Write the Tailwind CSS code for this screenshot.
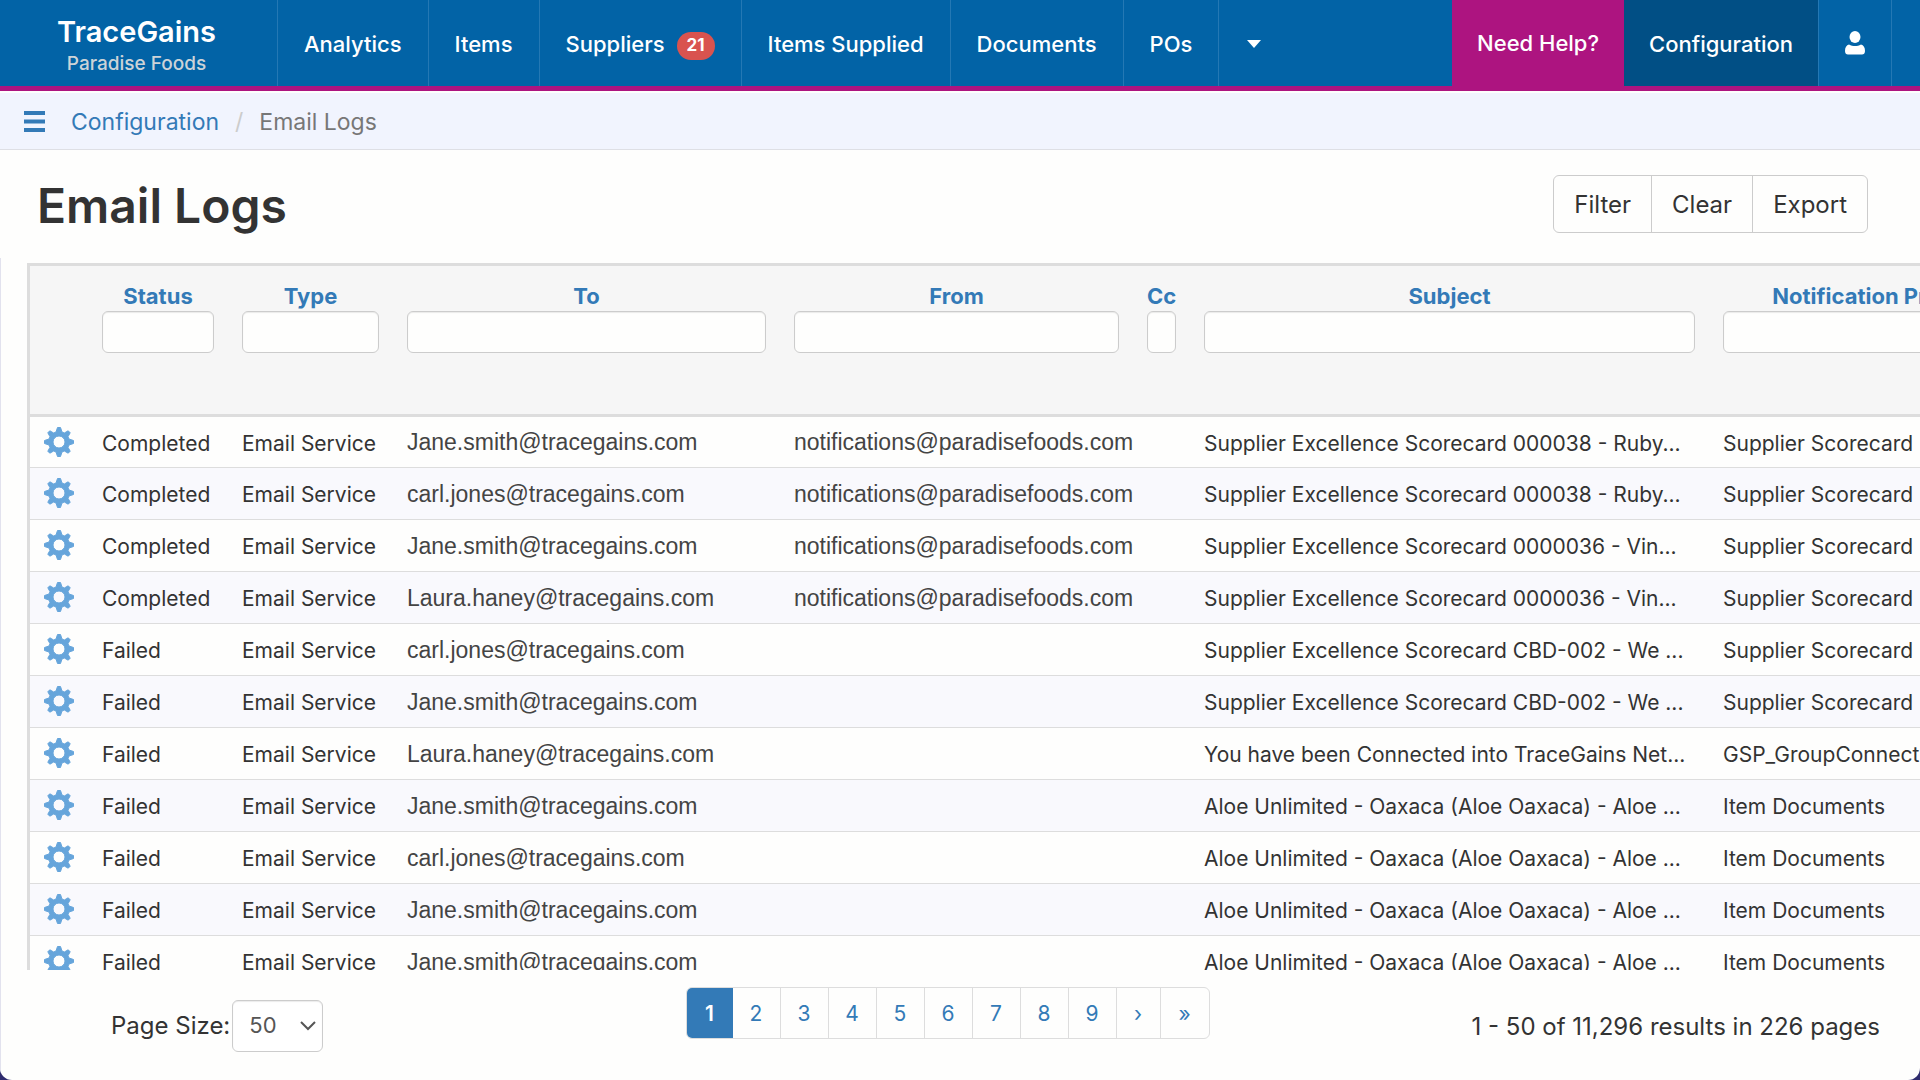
<!DOCTYPE html>
<html lang="en">
<head>
  <meta charset="UTF-8" />
  <meta name="viewport" content="width=device-width, initial-scale=1.0" />
  <title>Email Logs - TraceGains</title>
  <script src="https://cdn.jsdelivr.net/npm/@tailwindcss/browser@4"></script>
</head>
<body class="bg-[#2f2c6e] font-['Inter','Liberation_Sans',sans-serif] text-[#333]">
  <div class="h-screen flex flex-col overflow-hidden bg-[#fefefd] rounded-b-xl">

    <!-- Top navigation -->
    <header class="shrink-0 h-[91px] flex bg-[#0263a6] border-b-5 border-[#ad1480] text-[22px] font-medium text-white">
      <a href="#" class="w-[278px] flex flex-col items-center justify-center leading-8 border-r border-[#2478b4] pt-[10px] pr-1">
        <span class="text-[29px] font-semibold">TraceGains</span>
        <span class="text-[19px] text-[#ccd3d8]">Paradise Foods</span>
      </a>
      <nav class="flex">
        <a href="#" class="px-[26px] pt-[2px] flex items-center border-r border-[#2478b4]">Analytics</a>
        <a href="#" class="px-[26px] pt-[2px] flex items-center border-r border-[#2478b4]">Items</a>
        <a href="#" class="px-[26px] pt-[2px] flex items-center gap-3 border-r border-[#2478b4]">Suppliers
          <span class="mt-1 h-7 px-[10px] flex items-center rounded-full bg-[#d9534f] text-[17px] font-bold">21</span>
        </a>
        <a href="#" class="px-[26px] pt-[2px] flex items-center border-r border-[#2478b4]">Items Supplied</a>
        <a href="#" class="px-[26px] pt-[2px] flex items-center border-r border-[#2478b4]">Documents</a>
        <a href="#" class="px-[26px] pt-[2px] flex items-center border-r border-[#2478b4]">POs</a>
        <button type="button" aria-label="More" class="px-7 pt-[2px] flex items-center">
          <svg class="w-[14px] h-2" viewBox="0 0 14 8" fill="currentColor"><path d="M0 0h14L7 8z" /></svg>
        </button>
      </nav>
      <nav class="flex ml-auto">
        <a href="#" class="px-[25px] flex items-center bg-[#ad1480]">Need Help?</a>
        <a href="#" class="px-[25px] pt-[2px] flex items-center bg-[#014f85]">Configuration</a>
        <a href="#" aria-label="Profile" class="px-[26px] flex items-center border-x border-[#2478b4]">
          <svg class="w-5 h-6" viewBox="0 0 20 24" fill="currentColor">
            <ellipse cx="10" cy="6" rx="5.5" ry="6" />
            <path d="M4 13.5c2 1.3 4 1.6 6 1.6s4-.3 6-1.6c2.600.6 4 3 4 6.500 0 2.400-1.300 3.500-3 3.500H3c-1.700 0-3-1.100-3-3.500 0-3.500 1.400-5.900 4-6.500z" />
          </svg>
        </a>
        <span class="w-7"></span>
      </nav>
    </header>

    <!-- Breadcrumb -->
    <div class="shrink-0 mt-[2px] h-[57px] flex items-center bg-[#f1f4fe] border-b border-[#dedfe5] px-6 text-[23px]">
      <button type="button" aria-label="Toggle menu" class="text-[#337ab7]">
        <svg class="w-[21px] h-[21px]" viewBox="0 0 21 21" fill="currentColor"><path d="M0 0h21v4H0zM0 8.500h21v4H0zM0 17h21v4H0z" /></svg>
      </button>
      <a href="#" class="ml-[26px] pt-[2px] text-[#337ab7]">Configuration</a>
      <span class="mx-4 pt-[2px] text-[#ccc]">/</span>
      <span class="pt-[2px] text-[#777]">Email Logs</span>
    </div>

    <main class="flex-1 min-h-0 flex flex-col">
      <div class="shrink-0 h-[108px] flex items-center justify-between pl-[37px] pr-[52px]">
        <h1 class="pt-[3px] text-[48px] font-semibold">Email Logs</h1>
        <div class="flex h-[58px] border border-[#ccc] rounded-md divide-x divide-[#ccc] text-2xl">
          <button type="button" class="px-5 pt-[2px]">Filter</button>
          <button type="button" class="px-5 pt-[2px]">Clear</button>
          <button type="button" class="px-5 pt-[2px]">Export</button>
        </div>
      </div>

      <div class="flex-1 min-h-0 flex flex-col border-l border-[#e2e2ee] pt-[5px]">
        <!-- Log grid -->
        <div class="flex-1 min-h-0 ml-[26px] overflow-hidden border-t-3 border-l-3 border-[#ddd]">
          <table class="table-fixed w-[2024px] text-[21px] whitespace-nowrap">
            <colgroup>
              <col class="w-[58px]" />
              <col class="w-[140px]" />
              <col class="w-[165px]" />
              <col class="w-[387px]" />
              <col class="w-[353px]" />
              <col class="w-[57px]" />
              <col class="w-[519px]" />
              <col />
            </colgroup>
            <thead class="bg-[#f6f6f6] text-[22px] text-[#337ab7]">
              <tr id="columns" class="h-[149px] border-b-3 border-[#ddd]">
                <td></td>
              </tr>
            </thead>
            <tbody id="logs"></tbody>
          </table>
        </div>

        <!-- Pager -->
        <footer class="shrink-0 h-[110px] grid grid-cols-[1fr_auto_1fr] items-start pl-[14px] pr-10 pt-[17px] text-2xl">
          <div class="flex items-center gap-[2px] pl-24 pt-[13px]">
            <label for="pageSize">Page Size:</label>
            <div class="relative">
              <select id="pageSize" class="block appearance-none w-[91px] h-[52px] pl-4 border border-[#ccc] rounded-md bg-white text-[22px] text-[#555] shadow-[inset_0_1px_1px_rgba(0,0,0,0.08)]">
                <option>50</option>
              </select>
              <svg class="absolute right-[7px] top-[21px] w-4 h-[10px] pointer-events-none" viewBox="0 0 16 10" fill="none" stroke="#555" stroke-width="2"><path d="M1 1l7 7 7-7" /></svg>
            </div>
          </div>
          <nav aria-label="Pages" class="flex h-[52px] border border-[#ddd] rounded-md overflow-hidden text-[21px] text-[#337ab7]">
            <a href="#" class="w-[46px] pt-[2px] flex items-center justify-center bg-[#337ab7] text-white font-semibold">1</a>
            <a href="#" class="w-12 pt-[2px] flex items-center justify-center border-r border-[#ddd]">2</a>
            <a href="#" class="w-12 pt-[2px] flex items-center justify-center border-r border-[#ddd]">3</a>
            <a href="#" class="w-12 pt-[2px] flex items-center justify-center border-r border-[#ddd]">4</a>
            <a href="#" class="w-12 pt-[2px] flex items-center justify-center border-r border-[#ddd]">5</a>
            <a href="#" class="w-12 pt-[2px] flex items-center justify-center border-r border-[#ddd]">6</a>
            <a href="#" class="w-12 pt-[2px] flex items-center justify-center border-r border-[#ddd]">7</a>
            <a href="#" class="w-12 pt-[2px] flex items-center justify-center border-r border-[#ddd]">8</a>
            <a href="#" class="w-12 pt-[2px] flex items-center justify-center border-r border-[#ddd]">9</a>
            <a href="#" class="w-11 pt-[2px] flex items-center justify-center border-r border-[#ddd]">›</a>
            <a href="#" class="w-12 pt-[2px] flex items-center justify-center">»</a>
          </nav>
          <p class="text-right pt-6">1 - 50 of 11,296 results in 226 pages</p>
        </footer>
      </div>
    </main>
  </div>

  <script>
    const columns = ['Status', 'Type', 'To', 'From', 'Cc', 'Subject', 'Notification Process'];

    const jane = 'Jane.smith@tracegains.com';
    const carl = 'carl.jones@tracegains.com';
    const laura = 'Laura.haney@tracegains.com';
    const sender = 'notifications@paradisefoods.com';
    const aloe = 'Aloe Unlimited - Oaxaca (Aloe Oaxaca) - Aloe ...';

    const logs = [
      ['Completed', jane, sender, 'Supplier Excellence Scorecard 000038 - Ruby...', 'Supplier Scorecard'],
      ['Completed', carl, sender, 'Supplier Excellence Scorecard 000038 - Ruby...', 'Supplier Scorecard'],
      ['Completed', jane, sender, 'Supplier Excellence Scorecard 0000036 - Vin...', 'Supplier Scorecard'],
      ['Completed', laura, sender, 'Supplier Excellence Scorecard 0000036 - Vin...', 'Supplier Scorecard'],
      ['Failed', carl, '', 'Supplier Excellence Scorecard CBD-002 - We ...', 'Supplier Scorecard'],
      ['Failed', jane, '', 'Supplier Excellence Scorecard CBD-002 - We ...', 'Supplier Scorecard'],
      ['Failed', laura, '', 'You have been Connected into TraceGains Net...', 'GSP_GroupConnection'],
      ['Failed', jane, '', aloe, 'Item Documents'],
      ['Failed', carl, '', aloe, 'Item Documents'],
      ['Failed', jane, '', aloe, 'Item Documents'],
      ['Failed', jane, '', aloe, 'Item Documents'],
    ];

    // Column titles with their filter boxes
    document.getElementById('columns').innerHTML += columns.map((name, i) => `
      <th class="px-[14px] pt-4 align-top font-bold">
        <label for="filter${i}" class="block h-[29px] leading-7">${name}</label>
        <input id="filter${i}" type="text" class="block w-full h-[42px] px-2 border border-[#ccc] rounded-md bg-[#fefefd] shadow-[inset_0_1px_1px_rgba(0,0,0,0.08)]" />
      </th>`).join('');

    const gear = `
      <svg class="w-[30px] h-[30px] mx-auto" viewBox="-15 -15 30 30" fill="#66a5db" stroke="#66a5db" stroke-linejoin="round">
        <path fill-rule="evenodd" d="M-1.500-14.500h3l1.500 4.500 2.300 1 3.900-2.200 2 2-2.200 3.900 1 2.300 4.500 1.500v3l-4.500 1.500-1 2.300 2.200 3.900-2 2-3.900-2.200-2.300 1-1.500 4.500h-3l-1.500-4.500-2.300-1-3.900 2.200-2-2 2.200-3.900-1-2.300-4.500-1.500v-3l4.500-1.500 1-2.300-2.200-3.900 2-2 3.900 2.200 2.300-1zM0-6a6 6 0 100 12 6 6 0 100-12z" />
      </svg>`;

    document.getElementById('logs').innerHTML = logs.map(([status, to, from, subject, process]) => `
      <tr class="h-[52px] border-b border-[#ddd] even:bg-[#f9f9fd]">
        <td><button type="button" aria-label="Actions" class="block w-full">${gear}</button></td>
        <td class="px-[14px] pt-1">${status}</td>
        <td class="px-[14px] pt-1">Email Service</td>
        <td class="px-[14px] pt-[2px] font-['Liberation_Sans',Arial,sans-serif] text-[23px] text-[#444]">${to}</td>
        <td class="px-[14px] pt-[2px] font-['Liberation_Sans',Arial,sans-serif] text-[23px] text-[#444]">${from}</td>
        <td></td>
        <td class="px-[14px] pt-1">${subject}</td>
        <td class="px-[14px] pt-1">${process}</td>
      </tr>`).join('');
  </script>
</body>
</html>
